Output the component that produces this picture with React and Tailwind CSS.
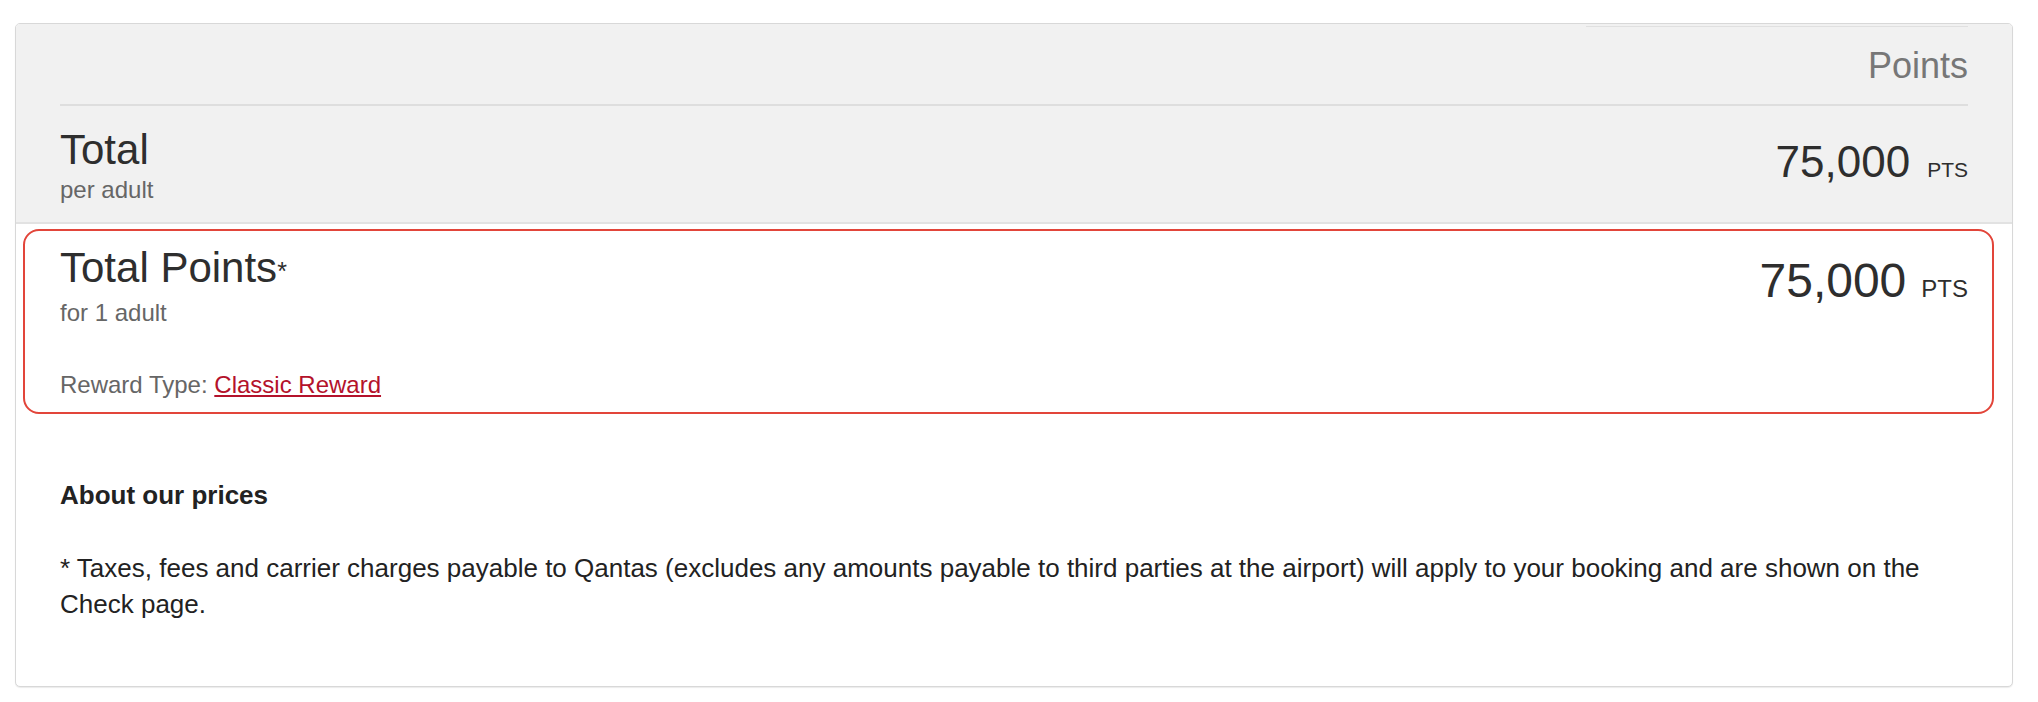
import React from "react";

const font = { fontFamily: '"Liberation Sans", Arial, Helvetica, sans-serif' };

const App = () => {
  return (
    <div className="min-h-screen bg-white pt-[23px] pl-[15px]" style={font}>
      <div className="w-[1998px] border border-[#d8d8d8] rounded-[5px] bg-white overflow-hidden shadow-[0_1px_1px_rgba(0,0,0,0.08)]">
        {/* Header */}
        <div className="bg-[#f1f1f1] border-b-2 border-[#e2e2e2] px-[44px]">
          <div className="flex justify-end border-b-2 border-[#dedede]">
            <div className="w-[382px] mt-[2px] border-t border-[#e0e0e0] pt-[19px] pb-[18px] text-right">
              <span className="text-[36px] leading-[40px] text-[#777]">Points</span>
            </div>
          </div>

          {/* Total per adult */}
          <div className="flex items-start justify-between pt-[23px] pb-[18px]">
            <div>
              <div className="text-[42px] leading-[42px] text-[#2e2e2e]">Total</div>
              <div className="mt-[5px] text-[24px] leading-[28px] text-[#666]">per adult</div>
            </div>
            <div className="mt-[11px] flex items-baseline text-[#2e2e2e]">
              <span className="text-[44px] leading-[44px]">75,000</span>
              <span className="ml-[17px] text-[21px] leading-[24px]">PTS</span>
            </div>
          </div>
        </div>

        {/* Total points box */}
        <div className="mt-[5px] ml-[7px] mr-[18px] border-2 border-[#e2453a] rounded-[16px] pl-[35px] pr-[24px] pt-[16px] pb-[13px]">
          <div className="flex items-start justify-between">
            <div>
              <div className="text-[42px] leading-[42px] text-[#2e2e2e]">
                Total Points<span className="text-[25px] relative -top-[2px]">*</span>
              </div>
              <div className="mt-[5px] text-[24px] leading-[28px] text-[#666]">for 1 adult</div>
            </div>
            <div className="mt-[10px] flex items-baseline text-[#2e2e2e]">
              <span className="text-[48px] leading-[48px]">75,000</span>
              <span className="ml-[15px] text-[24px] leading-[28px]">PTS</span>
            </div>
          </div>
          <div className="mt-[44px] text-[24px] leading-[28px] text-[#666]">
            Reward Type:{" "}
            <a href="#" className="text-[#b4122b] underline">
              Classic Reward
            </a>
          </div>
        </div>

        {/* About our prices */}
        <div className="px-[44px] pt-[66px] pb-[64px]">
          <h3 className="text-[26px] leading-[30px] font-bold text-[#222]">About our prices</h3>
          <p className="mt-[40px] text-[26px] leading-[36px] text-[#222]">
            * Taxes, fees and carrier charges payable to Qantas (excludes any amounts payable to third parties at the airport) will apply to your booking and are shown on the Check page.
          </p>
        </div>
      </div>
    </div>
  );
};

export default App;
